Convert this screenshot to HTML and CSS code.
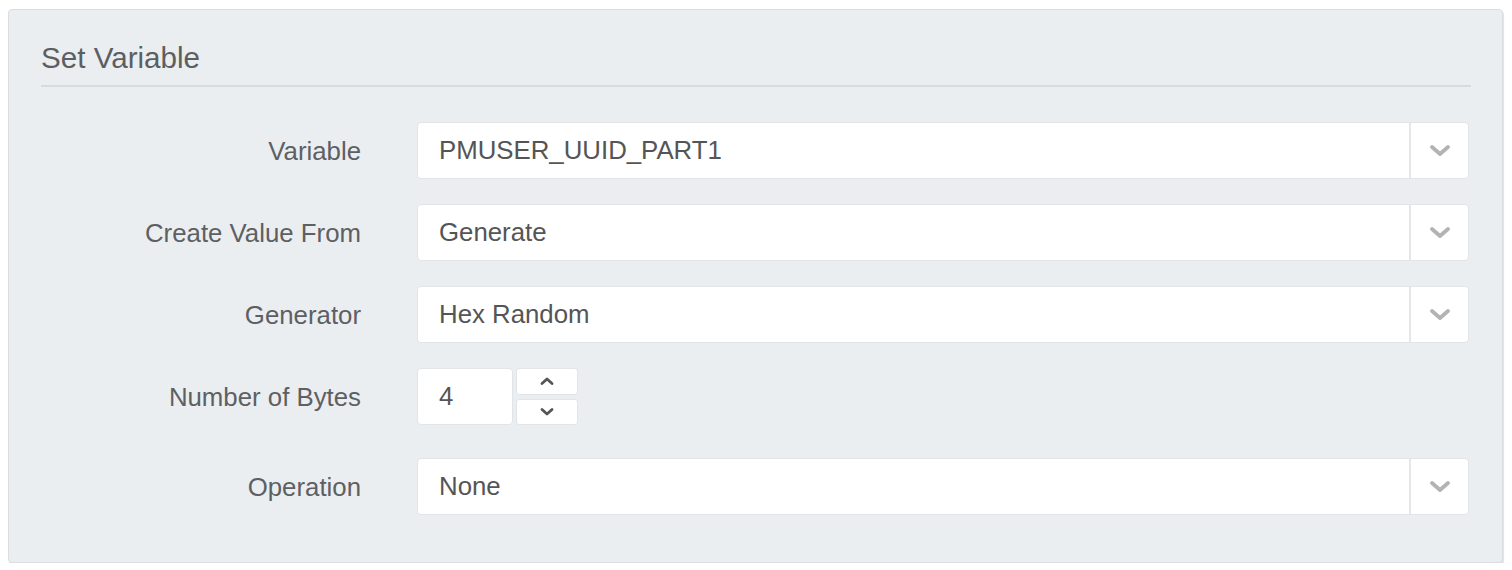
FILE: index.html
```html
<!DOCTYPE html>
<html>
<head>
<meta charset="utf-8">
<link rel="stylesheet" href="styles.css">
</head>
<body>
<div class="panel">
  <h2 class="title">Set Variable</h2>
  <div class="form">
    <label class="label">Variable</label>
    <div class="select">
      <span class="select-value">PMUSER_UUID_PART1</span>
      <span class="select-btn"><svg width="24" height="15" viewBox="0 0 24 15"><path d="M4 4 L12 11 L20 4" fill="none" stroke="#b3b3b3" stroke-width="3.8" stroke-linecap="round" stroke-linejoin="round"/></svg></span>
    </div>

    <label class="label">Create Value From</label>
    <div class="select">
      <span class="select-value">Generate</span>
      <span class="select-btn"><svg width="24" height="15" viewBox="0 0 24 15"><path d="M4 4 L12 11 L20 4" fill="none" stroke="#b3b3b3" stroke-width="3.8" stroke-linecap="round" stroke-linejoin="round"/></svg></span>
    </div>

    <label class="label">Generator</label>
    <div class="select">
      <span class="select-value">Hex Random</span>
      <span class="select-btn"><svg width="24" height="15" viewBox="0 0 24 15"><path d="M4 4 L12 11 L20 4" fill="none" stroke="#b3b3b3" stroke-width="3.8" stroke-linecap="round" stroke-linejoin="round"/></svg></span>
    </div>

    <label class="label label-num">Number of Bytes</label>
    <div class="number">
      <span class="number-value">4</span>
      <div class="spinner">
        <span class="spin-btn"><svg width="16" height="10" viewBox="0 0 16 10"><path d="M3 7.5 L8 3 L13 7.5" fill="none" stroke="#555" stroke-width="2.8" stroke-linecap="round" stroke-linejoin="round"/></svg></span>
        <span class="spin-btn"><svg width="16" height="10" viewBox="0 0 16 10"><path d="M3 2.5 L8 7 L13 2.5" fill="none" stroke="#555" stroke-width="2.8" stroke-linecap="round" stroke-linejoin="round"/></svg></span>
      </div>
    </div>

    <label class="label">Operation</label>
    <div class="select">
      <span class="select-value">None</span>
      <span class="select-btn"><svg width="24" height="15" viewBox="0 0 24 15"><path d="M4 4 L12 11 L20 4" fill="none" stroke="#b3b3b3" stroke-width="3.8" stroke-linecap="round" stroke-linejoin="round"/></svg></span>
    </div>
  </div>
</div>
</body>
</html>
```

FILE: styles.css
```css
html, body {
  margin: 0;
  padding: 0;
  background: #ffffff;
}

body {
  font-family: "Liberation Sans", Arial, sans-serif;
  color: #555;
}

.panel {
  box-sizing: border-box;
  margin: 9px 9px 0 8px;
  height: 554px;
  background: #ebeef1;
  border: 1px solid #d9dde0;
  border-radius: 4px;
  box-shadow: 1px 2px 1px rgba(0, 0, 0, 0.12);
  padding: 31px 31px 0 32px;
}

.title {
  margin: 0;
  font-size: 29.6px;
  font-weight: normal;
  line-height: 34px;
  color: #5c5f62;
  padding-bottom: 10px;
  border-bottom: 2px solid #d7dbdf;
}

.form {
  display: grid;
  grid-template-columns: 320px 1fr;
  column-gap: 56px;
  row-gap: 25px;
  margin-top: 35px;
  margin-right: 2px;
  align-items: center;
}

.label {
  text-align: right;
  font-size: 25.8px;
  color: #5d6063;
  line-height: 30px;
}

.select {
  display: flex;
  height: 57px;
  background: #fff;
  border: 1px solid #e2e5e8;
  border-radius: 4px;
  box-sizing: border-box;
}

.select-value {
  flex: 1;
  display: flex;
  align-items: center;
  padding-left: 21px;
  font-size: 25.8px;
  color: #555;
  border-right: 2px solid #e4e6e8;
}

.select-btn {
  width: 57px;
  display: flex;
  align-items: center;
  justify-content: center;
}

.number {
  display: flex;
  gap: 3px;
  height: 57px;
  margin-bottom: 8px;
}

.label-num {
  margin-bottom: 8px;
}

.number-value {
  box-sizing: border-box;
  width: 96px;
  height: 57px;
  background: #fff;
  border: 1px solid #e2e5e8;
  border-radius: 4px;
  display: flex;
  align-items: center;
  padding-left: 21px;
  font-size: 25.8px;
  color: #555;
}

.spinner {
  display: flex;
  flex-direction: column;
  gap: 4px;
  width: 62px;
}

.spin-btn {
  flex: 1;
  background: #fff;
  border: 1px solid #e2e5e8;
  border-radius: 3px;
  display: flex;
  align-items: center;
  justify-content: center;
}
```
